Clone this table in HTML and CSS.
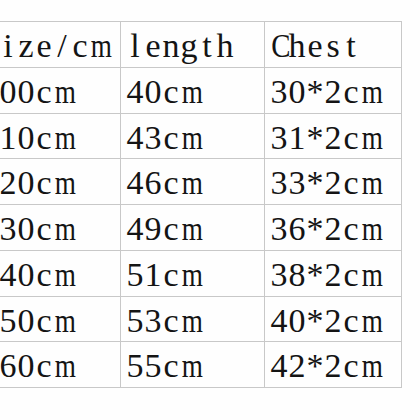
FILE: index.html
```html
<!DOCTYPE html>
<html>
<head>
<meta charset="utf-8">
<link rel="stylesheet" href="styles.css">
</head>
<body>
<div class="table">
  <div class="cell"><span class="ch">S</span><span class="ch">i</span><span class="ch">z</span><span class="ch">e</span><span class="ch">/</span><span class="ch">c</span><span class="ch wide">m</span></div>
  <div class="cell"><span class="ch">l</span><span class="ch">e</span><span class="ch">n</span><span class="ch">g</span><span class="ch">t</span><span class="ch">h</span></div>
  <div class="cell"><span class="ch cap">C</span><span class="ch">h</span><span class="ch">e</span><span class="ch">s</span><span class="ch">t</span></div>

  <div class="cell"><span class="ch">1</span><span class="ch">0</span><span class="ch">0</span><span class="ch">c</span><span class="ch wide">m</span></div>
  <div class="cell"><span class="ch">4</span><span class="ch">0</span><span class="ch">c</span><span class="ch wide">m</span></div>
  <div class="cell"><span class="ch">3</span><span class="ch">0</span><span class="ch">*</span><span class="ch">2</span><span class="ch">c</span><span class="ch wide">m</span></div>

  <div class="cell"><span class="ch">1</span><span class="ch">1</span><span class="ch">0</span><span class="ch">c</span><span class="ch wide">m</span></div>
  <div class="cell"><span class="ch">4</span><span class="ch">3</span><span class="ch">c</span><span class="ch wide">m</span></div>
  <div class="cell"><span class="ch">3</span><span class="ch">1</span><span class="ch">*</span><span class="ch">2</span><span class="ch">c</span><span class="ch wide">m</span></div>

  <div class="cell"><span class="ch">1</span><span class="ch">2</span><span class="ch">0</span><span class="ch">c</span><span class="ch wide">m</span></div>
  <div class="cell"><span class="ch">4</span><span class="ch">6</span><span class="ch">c</span><span class="ch wide">m</span></div>
  <div class="cell"><span class="ch">3</span><span class="ch">3</span><span class="ch">*</span><span class="ch">2</span><span class="ch">c</span><span class="ch wide">m</span></div>

  <div class="cell"><span class="ch">1</span><span class="ch">3</span><span class="ch">0</span><span class="ch">c</span><span class="ch wide">m</span></div>
  <div class="cell"><span class="ch">4</span><span class="ch">9</span><span class="ch">c</span><span class="ch wide">m</span></div>
  <div class="cell"><span class="ch">3</span><span class="ch">6</span><span class="ch">*</span><span class="ch">2</span><span class="ch">c</span><span class="ch wide">m</span></div>

  <div class="cell"><span class="ch">1</span><span class="ch">4</span><span class="ch">0</span><span class="ch">c</span><span class="ch wide">m</span></div>
  <div class="cell"><span class="ch">5</span><span class="ch">1</span><span class="ch">c</span><span class="ch wide">m</span></div>
  <div class="cell"><span class="ch">3</span><span class="ch">8</span><span class="ch">*</span><span class="ch">2</span><span class="ch">c</span><span class="ch wide">m</span></div>

  <div class="cell"><span class="ch">1</span><span class="ch">5</span><span class="ch">0</span><span class="ch">c</span><span class="ch wide">m</span></div>
  <div class="cell"><span class="ch">5</span><span class="ch">3</span><span class="ch">c</span><span class="ch wide">m</span></div>
  <div class="cell"><span class="ch">4</span><span class="ch">0</span><span class="ch">*</span><span class="ch">2</span><span class="ch">c</span><span class="ch wide">m</span></div>

  <div class="cell"><span class="ch">1</span><span class="ch">6</span><span class="ch">0</span><span class="ch">c</span><span class="ch wide">m</span></div>
  <div class="cell"><span class="ch">5</span><span class="ch">5</span><span class="ch">c</span><span class="ch wide">m</span></div>
  <div class="cell"><span class="ch">4</span><span class="ch">2</span><span class="ch">*</span><span class="ch">2</span><span class="ch">c</span><span class="ch wide">m</span></div>
</div>
</body>
</html>
```
FILE: styles.css
```css
html, body {
  margin: 0;
  padding: 0;
  background: #fefefe;
  overflow: hidden;
}
.table {
  display: grid;
  grid-template-columns: 144px 143px 136px;
  grid-auto-rows: 44.75px;
  gap: 1px;
  padding: 1px;
  background: #c8c8c8;
  width: max-content;
  margin: 21px 0 0 -25px;
}
.cell {
  background: #fefefe;
  font-family: "Liberation Serif", serif;
  font-size: 34px;
  line-height: 34px;
  color: #141414;
  padding: 7px 0 0 5px;
  white-space: nowrap;
}
.ch {
  display: inline-block;
  width: 18px;
  text-align: center;
}
.wide {
  transform: scaleX(0.8);
}
.cap {
  transform: scaleX(0.85);
}
```
